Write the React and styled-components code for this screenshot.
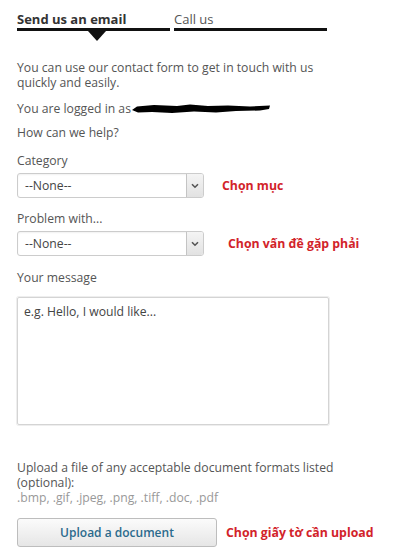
import styled, { createGlobalStyle } from 'styled-components';

const Global = createGlobalStyle`
  body {
    margin: 0;
    background: #fff;
    font-family: "Open Sans", "Liberation Sans", sans-serif;
    color: #555;
  }
`;

let Page = styled.div`
  width: 408px;
  height: 554px;
  padding: 0 17px;
  box-sizing: border-box;
  overflow: hidden;
`;

let Form = styled.div`
  width: 322px;
`;

let Tabs = styled.div`
  display: flex;
  gap: 4px;
  padding-top: 10px;
`;

let Tab = styled.div`
  position: relative;
  width: 153px;
  height: 18px;
  border-bottom: 3px solid #111;
  font-size: 13px;
  line-height: 18px;
  font-weight: ${props => props.active ? 700 : 400};
  color: ${props => props.active ? '#333' : '#555'};
  &::after {
    content: '';
    display: ${props => props.active ? 'block' : 'none'};
    position: absolute;
    left: 71px;
    top: 21px;
    border-left: 9px solid transparent;
    border-right: 9px solid transparent;
    border-top: 10px solid #111;
  }
`;

let Text = styled.p`
  margin: ${props => props.mt || 0}px 0 0;
  font-size: 12.2px;
  line-height: 15px;
  color: ${props => props.muted ? '#999' : '#555'};
`;

let Redacted = styled.svg`
  vertical-align: -1px;
  margin-left: 1px;
`;

let Row = styled.div`
  display: flex;
  align-items: center;
  margin-top: ${props => props.mt || 0}px;
`;

let Select = styled.div`
  display: flex;
  flex: none;
  width: 187px;
  height: 25px;
  box-sizing: border-box;
  border: 1px solid #ccc;
  border-radius: 3px;
  box-shadow: inset 0 1px 2px rgba(0, 0, 0, 0.06);
  overflow: hidden;
  font-size: 12.2px;
  color: #444;
`;

let SelectValue = styled.div`
  flex: 1;
  padding-left: 7px;
  line-height: 23px;
`;

let Arrow = styled.div`
  width: 16px;
  display: flex;
  align-items: center;
  justify-content: center;
  border-left: 1px solid #c4c4c4;
  background: linear-gradient(#f4f4f4, #e2e2e2);
`;

let Note = styled.span`
  flex: none;
  margin-left: ${props => props.ml}px;
  color: #d2232a;
  font-weight: 700;
  font-size: 12.3px;
  white-space: nowrap;
`;

let Message = styled.div`
  margin-top: 12px;
  width: 312px;
  height: 128px;
  box-sizing: border-box;
  border: 1px solid #d4d4d4;
  border-radius: 2px;
  box-shadow: 0 0 0 1px #eee;
  padding: 6px 6px;
  font-size: 12.2px;
  line-height: 15px;
  color: #444;
`;

let Button = styled.div`
  flex: none;
  width: 200px;
  height: 29px;
  box-sizing: border-box;
  border: 1px solid #bdbdbd;
  border-radius: 3px;
  background: linear-gradient(#fbfbfb, #e6e6e6);
  color: #2b6a8c;
  font-size: 12px;
  font-weight: 600;
  text-align: center;
  line-height: 27px;
`;

function Dropdown(props) {
  return (
    <Select>
      <SelectValue>{ props.value }</SelectValue>
      <Arrow>
        <svg width="8" height="6" viewBox="0 0 8 6">
          <path d="M1 1.2 L4 4.2 L7 1.2" fill="none" stroke="#555" strokeWidth="1.6" />
        </svg>
      </Arrow>
    </Select>
  );
}

function App() {
  return (
    <Page>
      <Global />
      <Form>
        <Tabs>
          <Tab active>Send us an email</Tab>
          <Tab>Call us</Tab>
        </Tabs>

        <Text mt={29}>You can use our contact form to get in touch with us quickly and easily.</Text>
        <Text mt={11}>
          You are logged in as
          <Redacted width="138" height="10" viewBox="0 0 138 10">
            <path d="M0 6 L5 2.5 L22 1 L45 2 L58 0.5 L76 2 L96 1.5 L118 2.5 L138 1.5 L137 5 L128 6.5 L104 7 L84 8.5 L62 7.5 L40 9 L20 8 L6 8.5 Z" fill="#000" />
          </Redacted>
        </Text>
        <Text mt={9}>How can we help?</Text>

        <Text mt={13}>Category</Text>
        <Row mt={5}>
          <Dropdown value="--None--" />
          <Note ml={18}>Chọn mục</Note>
        </Row>

        <Text mt={13}>Problem with...</Text>
        <Row mt={5}>
          <Dropdown value="--None--" />
          <Note ml={24}>Chọn vấn đề gặp phải</Note>
        </Row>

        <Text mt={14}>Your message</Text>
        <Message>e.g. Hello, I would like...</Message>

        <Text mt={35}>Upload a file of any acceptable document formats listed (optional):</Text>
        <Text muted>.bmp, .gif, .jpeg, .png, .tiff, .doc, .pdf</Text>
        <Row mt={13}>
          <Button>Upload a document</Button>
          <Note ml={9}>Chọn giấy tờ cần upload</Note>
        </Row>
      </Form>
    </Page>
  );
}

export default App;
